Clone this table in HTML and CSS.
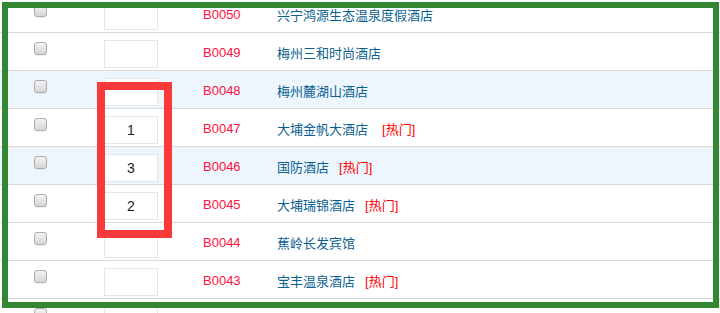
FILE: index.html
```html
<!DOCTYPE html>
<html lang="zh">
<head>
<meta charset="utf-8">
<title>酒店列表</title>
<link rel="stylesheet" href="styles.css">
</head>
<body>
<div class="list">
  <div class="row">
    <div class="c-cb"><input type="checkbox" class="cb"></div>
    <div class="c-sort"><input type="text" class="sort" value=""></div>
    <div class="c-code">B0050</div>
    <div class="c-name"><a class="name">兴宁鸿源生态温泉度假酒店</a></div>
  </div>
  <div class="row">
    <div class="c-cb"><input type="checkbox" class="cb"></div>
    <div class="c-sort"><input type="text" class="sort" value=""></div>
    <div class="c-code">B0049</div>
    <div class="c-name"><a class="name">梅州三和时尚酒店</a></div>
  </div>
  <div class="row alt">
    <div class="c-cb"><input type="checkbox" class="cb"></div>
    <div class="c-sort"><input type="text" class="sort" value=""></div>
    <div class="c-code">B0048</div>
    <div class="c-name"><a class="name">梅州麓湖山酒店</a></div>
  </div>
  <div class="row">
    <div class="c-cb"><input type="checkbox" class="cb"></div>
    <div class="c-sort"><input type="text" class="sort" value="1"></div>
    <div class="c-code">B0047</div>
    <div class="c-name"><a class="name">大埔金帆大酒店</a><span class="hot wide">[热门]</span></div>
  </div>
  <div class="row alt">
    <div class="c-cb"><input type="checkbox" class="cb"></div>
    <div class="c-sort"><input type="text" class="sort" value="3"></div>
    <div class="c-code">B0046</div>
    <div class="c-name"><a class="name">国防酒店</a><span class="hot">[热门]</span></div>
  </div>
  <div class="row">
    <div class="c-cb"><input type="checkbox" class="cb"></div>
    <div class="c-sort"><input type="text" class="sort" value="2"></div>
    <div class="c-code">B0045</div>
    <div class="c-name"><a class="name">大埔瑞锦酒店</a><span class="hot">[热门]</span></div>
  </div>
  <div class="row">
    <div class="c-cb"><input type="checkbox" class="cb"></div>
    <div class="c-sort"><input type="text" class="sort" value=""></div>
    <div class="c-code">B0044</div>
    <div class="c-name"><a class="name">蕉岭长发宾馆</a></div>
  </div>
  <div class="row">
    <div class="c-cb"><input type="checkbox" class="cb"></div>
    <div class="c-sort"><input type="text" class="sort" value=""></div>
    <div class="c-code">B0043</div>
    <div class="c-name"><a class="name">宝丰温泉酒店</a><span class="hot">[热门]</span></div>
  </div>
  <div class="row">
    <div class="c-cb"><input type="checkbox" class="cb"></div>
    <div class="c-sort"><input type="text" class="sort" value=""></div>
    <div class="c-code">B0042</div>
    <div class="c-name"><a class="name">梅州客天下国际旅游度假酒店</a><span class="hot">[热门]</span></div>
  </div>
</div>
<div class="frame-green"></div>
<div class="frame-red"></div>
</body>
</html>
```

FILE: styles.css
```css
html, body {
  margin: 0;
  padding: 0;
  overflow: hidden;
  background: #ffffff;
}

body {
  position: relative;
  width: 720px;
  height: 313px;
  font-family: "Liberation Sans", "Noto Sans CJK SC", sans-serif;
  font-size: 13px;
}

.list {
  margin-top: -5px;
  width: 720px;
}

.row {
  display: grid;
  grid-template-columns: 80px 123px 74px 1fr;
  align-items: center;
  height: 37px;
  border-bottom: 1px solid #dadada;
  background: #ffffff;
}

.row.alt {
  background: #eef6fd;
}

.c-cb {
  display: flex;
  justify-content: center;
}

.cb {
  appearance: none;
  -webkit-appearance: none;
  width: 13px;
  height: 13px;
  margin: -7px 0 0 0;
  border: 1px solid #ababab;
  border-radius: 3px;
  background: linear-gradient(#f3f3f3, #d6d6d6);
  box-shadow: 0 1px 1px rgba(0, 0, 0, 0.06);
}

.c-sort {
  padding-left: 24px;
}

.sort {
  display: block;
  box-sizing: border-box;
  width: 54px;
  height: 28px;
  margin: 4px 0 0 0;
  padding: 0;
  border: 1px solid #e6e6e6;
  background: #ffffff;
  text-align: center;
  font-family: "Liberation Sans", sans-serif;
  font-size: 14px;
  color: #1c1c2c;
}

.c-code {
  color: #ff1040;
  padding-top: 1px;
}

.c-name {
  padding-top: 1px;
  white-space: nowrap;
}

.name {
  color: #0b5f92;
  text-decoration: none;
}

.hot {
  color: #ff0000;
  margin-left: 10px;
}

.hot.wide {
  margin-left: 14px;
}

.frame-green {
  position: absolute;
  left: 2px;
  top: 2px;
  width: 717px;
  height: 306px;
  box-sizing: border-box;
  border: 6px solid #338733;
}

.frame-red {
  position: absolute;
  left: 97px;
  top: 82px;
  width: 75px;
  height: 156px;
  box-sizing: border-box;
  border: 8px solid #fa3a3a;
}
```
